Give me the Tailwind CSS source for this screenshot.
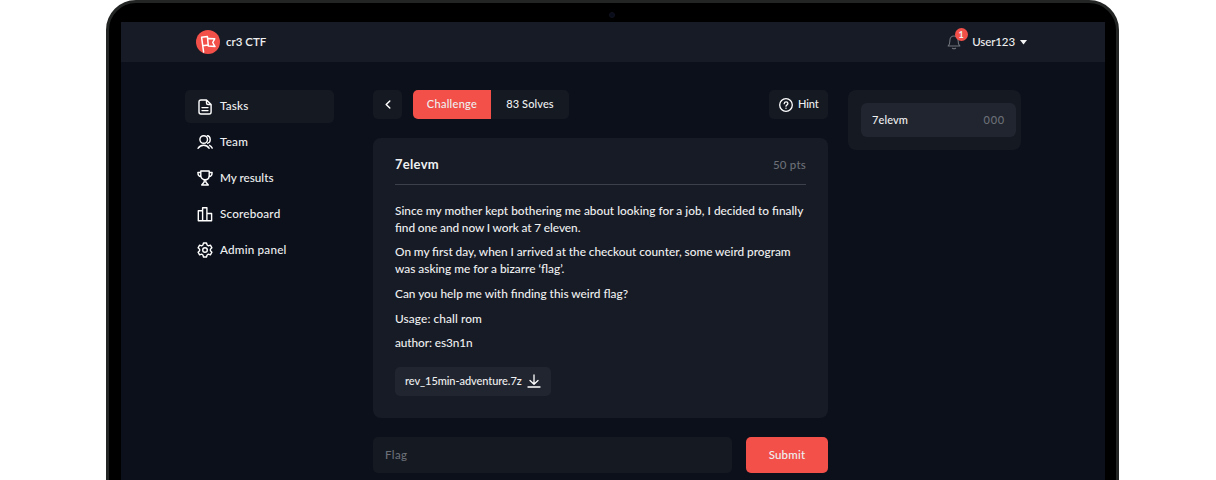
<!DOCTYPE html>
<html lang="en">
<head>
<meta charset="utf-8">
<title>cr3 CTF</title>
<script src="https://cdn.jsdelivr.net/npm/@tailwindcss/browser@4"></script>
</head>
<body class="bg-white font-['Lato',sans-serif] text-[11.5px] font-medium text-[#eff0f1]">
<div class="h-[480px] overflow-hidden">
<div class="relative mx-[106px] h-[520px] w-[1013px] rounded-t-[30px] border-[3px] border-[#232424] bg-black px-3 pt-[19px]">
  <i class="absolute left-[500px] top-[9px] size-[6px] rounded-full border border-[#10131f] bg-[#080b18]"></i>
  <div class="h-[480px] w-[984px] bg-[#0c101b]">
    <header class="flex h-10 items-center justify-between bg-[#171b25] pl-[75px] pr-[78px]">
      <div class="flex items-center gap-[6px]">
        <svg class="size-6" viewBox="0 0 24 24" fill="none" stroke="#fff" stroke-width="1.5" stroke-linejoin="round" stroke-linecap="round"><circle cx="12" cy="12" r="12" fill="#f25049" stroke="none"/><path d="M7.600 22 5.600 7.300 11.400 6.500 12.200 14.900 6.700 15.700M12.300 8.500 18.700 8.800 16.700 12.500 19 16.600 12.400 16 12.200 14.900"/></svg>
        <span class="font-semibold">cr3 CTF</span>
      </div>
      <div class="flex items-center">
        <div class="relative mr-[11px]">
          <svg class="block h-4 w-[14px]" viewBox="0 0 14 16" fill="none" stroke="#70747c" stroke-width="1.1" stroke-linecap="round" stroke-linejoin="round"><path d="M1.200 12h11.600c-1.400-1.400-1.700-3-1.700-5.500C11.100 3.900 9.500 2 7 2S2.900 3.900 2.900 6.500c0 2.500-.3 4.100-1.700 5.500ZM5.400 14.300q1.600.9 3.200 0"/></svg>
          <span class="absolute -top-[6px] left-[7.5px] flex size-[13px] items-center justify-center rounded-full bg-[#f25049] text-[9px] font-bold leading-none">1</span>
        </div>
        <span class="tracking-[-0.1px]">User123</span>
        <svg class="ml-[5px] h-[5px] w-[7px]" viewBox="0 0 7 5" fill="#f4f4f5"><path d="M0 0h7L3.500 4.600Z"/></svg>
      </div>
    </header>
    <div class="flex items-start pl-16 pt-7">
      <nav class="flex w-[149px] flex-col gap-[3px] text-[11.7px]">
        <a class="flex h-[33px] items-center gap-[7.5px] rounded-[5px] bg-[#151922] pl-[11.5px]">
          <svg class="size-4" viewBox="0 0 16 16" fill="none" stroke="#fff" stroke-width="1.400" stroke-linecap="round" stroke-linejoin="round"><path d="M9.500 1H4Q2 1 2 3v10q0 2 2 2h8.200q1.900 0 1.900-2V5.500ZM9.500 1v3q0 1.500 1.500 1.500h3M5 8.600h6M5 11.600h6"/></svg>
          <span class="-mt-px tracking-[0.2px]">Tasks</span></a>
        <a class="flex h-[33px] items-center gap-[7.5px] pl-[11.5px]">
          <svg class="size-4 -mt-px" viewBox="0 0 16 16" fill="none" stroke="#fff" stroke-width="1.400" stroke-linecap="round" stroke-linejoin="round"><circle cx="6.700" cy="5.500" r="3.800"/><path d="M1 14.300c1.500-2 3.400-3 5.700-3s4.100 1 5.500 3M10.300 1.800c3.600.3 4 6.400.4 7.400M12.600 11.300c1.100.5 2 1.500 2.600 2.800"/></svg>
          <span class="-mt-px tracking-[0.200px]">Team</span></a>
        <a class="flex h-[33px] items-center gap-[7.5px] pl-[11.5px]">
          <svg class="size-4 -mt-px" viewBox="0 0 16 16" fill="none" stroke="#fff" stroke-width="1.400" stroke-linecap="round" stroke-linejoin="round"><path d="M3.800 1h8.400v4.500c0 2.500-1.700 4.300-4.200 4.300S3.800 8 3.800 5.500ZM3.800 2.500H.9c0 2.600.9 4 3.200 4.100M12.200 2.500h2.900c0 2.600-.9 4-3.200 4.100M7.200 10v2L4.700 15h6.600L8.800 12v-2"/></svg>
          <span class="-mt-px">My results</span></a>
        <a class="flex h-[33px] items-center gap-[7.5px] pl-[11.5px]">
          <svg class="size-4 -mt-px" viewBox="0 0 16 16" fill="none" stroke="#fff" stroke-width="1.400" stroke-linejoin="round"><path d="M5.600 14.700H1.300V4.700h4.300ZM5.600 14.700V1.700h4.300v13ZM9.900 14.700V7.500h4.700v7.200Z"/></svg>
          <span class="-mt-px tracking-[0.2px]">Scoreboard</span></a>
        <a class="flex h-[33px] items-center gap-[7.5px] pl-[11.5px]">
          <svg class="size-4 -mt-px" viewBox="0 0 16 16" fill="none" stroke="#fff" stroke-width="1.400" stroke-linejoin="round"><path d="M6.500 1h3l.6 2 1.300.8 2-.6 1.500 2.600-1.500 1.400v1.600l1.500 1.400-1.500 2.600-2-.6-1.300.8-.6 2h-3l-.6-2-1.300-.8-2 .6-1.500-2.600 1.500-1.400V7.200L1.100 5.800l1.500-2.600 2 .6L5.900 3Z"/><circle cx="8" cy="8" r="2.300"/></svg>
          <span class="-mt-px tracking-[0.2px]">Admin panel</span></a>
      </nav>
      <main class="ml-[39px] w-[455px]">
        <div class="flex h-[29px]">
          <button class="flex w-[29px] items-center justify-center rounded-[5px] bg-[#151922]"><svg class="h-[9px] w-[6px]" viewBox="0 0 6 10" fill="none" stroke="#fff" stroke-width="1.600" stroke-linecap="round" stroke-linejoin="round"><path d="M5 1 1 5l4 4"/></svg></button>
          <div class="ml-[11px] flex overflow-hidden rounded-[5px] bg-[#151922] text-[11px]">
            <span class="flex w-[78px] items-center justify-center bg-[#f25049] tracking-[0.3px]">Challenge</span>
            <span class="flex w-[78px] items-center justify-center tracking-[0.1px]">83 Solves</span>
          </div>
          <button class="ml-auto flex w-[59px] items-center rounded-[5px] bg-[#151922] pl-[10px] text-[11px]">
            <svg class="mr-[5px] size-[14px]" viewBox="0 0 14 14" fill="none" stroke="#fff" stroke-width="1.300" stroke-linecap="round"><circle cx="7" cy="7" r="6.300"/><path d="M5.200 5.700c.2-2.400 3.700-2.200 3.700-.1C8.900 6.900 7 7 7 8.200M7 10.100v.2"/></svg>
            <span class="tracking-[-0.1px]">Hint</span></button>
        </div>
        <section class="mt-[19px] h-[280px] rounded-[8px] bg-[#171b25] px-[22px]">
          <div class="flex h-[47px] items-center justify-between border-b-[1.5px] border-[#3c404a] pt-[7px]">
            <h1 class="text-[13px] font-bold tracking-[0.3px]">7elevm</h1>
            <span class="tracking-[0.2px] text-[#6b6f77]">50 pts</span>
          </div>
          <div class="mt-[18px] flex flex-col gap-2 whitespace-nowrap text-[11.850px] leading-[16.700px]">
            <p><span class="[word-spacing:0.1px]">Since my mother kept bothering me about looking for a job, I decided to finally</span><br><span class="[word-spacing:-0.4px]">find one and now I work at 7 eleven.</span></p>
            <p><span class="[word-spacing:-0.2px]">On my first day, when I arrived at the checkout counter, some weird program</span><br><span>was asking me for a bizarre ‘flag’.</span></p>
            <p>Can you help me with finding this weird flag?</p>
            <p class="tracking-[0.1px]">Usage: chall rom</p>
            <p class="tracking-[-0.1px]">author: es3n1n</p>
          </div>
          <button class="mt-[15px] flex h-[29px] w-[156px] items-center rounded-[5px] bg-[#21252f] pl-[10px] text-[11px]">
            <span class="tracking-[-0.06px]">rev_15min-adventure.7z</span>
            <svg class="ml-[5px] size-[14px]" viewBox="0 0 14 14" fill="none" stroke="#fff" stroke-width="1.300" stroke-linecap="round" stroke-linejoin="round"><path d="M7 1v9M3 6.500l4 3.700 4-3.700M1 13h12"/></svg>
          </button>
        </section>
        <div class="mt-[19px] flex h-9 justify-between">
          <div class="flex w-[359px] items-center rounded-[5px] bg-[#151922] pl-[12px] tracking-[0.4px] text-[#6b6f77]">Flag</div>
          <button class="w-[82px] rounded-[5px] bg-[#f25049] tracking-[0.2px]">Submit</button>
        </div>
      </main>
      <aside class="ml-5 h-[60px] w-[173px] rounded-[8px] bg-[#151922] px-[13px] py-[13px]">
        <div class="-mr-2 flex h-[34px] w-[155px] items-center justify-between rounded-[6px] bg-[#21252f] px-[11px] text-[11px]"><span class="tracking-[0.1px]">7elevm</span><span class="tracking-[0.8px] text-[#6b6f77]">000</span></div>
      </aside>
    </div>
  </div>
</div>
</div>
</body>
</html>
